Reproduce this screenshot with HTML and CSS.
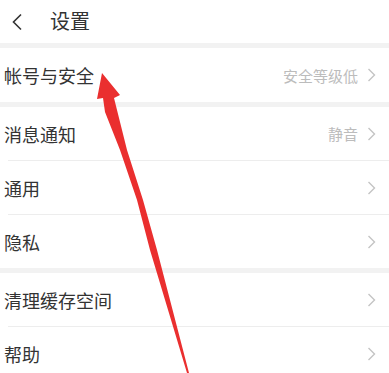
FILE: index.html
```html
<!DOCTYPE html>
<html lang="zh-CN">

<head>
  <meta charset="UTF-8" />
  <meta name="viewport" content="width=device-width, initial-scale=1.0" />
  <title>设置</title>
  <link rel="stylesheet" href="styles.css">
</head>

<body>
  <div class="page">
    <div class="header">
      <svg class="back" width="12" height="18" viewBox="0 0 12 18">
        <path d="M10 1.5 L2.5 9 L10 16.5" fill="none" stroke="#333" stroke-width="1.6" />
      </svg>
      <span class="title">设置</span>
    </div>

    <div class="band"></div>
    <div class="group">
      <div class="row tall">
        <span class="label">帐号与安全</span>
        <span class="value">安全等级低</span>
        <svg class="chev" width="9" height="14" viewBox="0 0 9 14">
          <path d="M1.5 1 L7.5 7 L1.5 13" fill="none" stroke="#c4c4c4" stroke-width="1.4" />
        </svg>
      </div>
    </div>

    <div class="band"></div>
    <div class="group">
      <div class="row">
        <span class="label">消息通知</span>
        <span class="value">静音</span>
        <svg class="chev" width="9" height="14" viewBox="0 0 9 14">
          <path d="M1.5 1 L7.5 7 L1.5 13" fill="none" stroke="#c4c4c4" stroke-width="1.4" />
        </svg>
      </div>
      <div class="row">
        <span class="label">通用</span>
        <svg class="chev" width="9" height="14" viewBox="0 0 9 14">
          <path d="M1.5 1 L7.5 7 L1.5 13" fill="none" stroke="#c4c4c4" stroke-width="1.4" />
        </svg>
      </div>
      <div class="row">
        <span class="label">隐私</span>
        <svg class="chev" width="9" height="14" viewBox="0 0 9 14">
          <path d="M1.5 1 L7.5 7 L1.5 13" fill="none" stroke="#c4c4c4" stroke-width="1.4" />
        </svg>
      </div>
    </div>

    <div class="band"></div>
    <div class="group">
      <div class="row">
        <span class="label">清理缓存空间</span>
        <svg class="chev" width="9" height="14" viewBox="0 0 9 14">
          <path d="M1.5 1 L7.5 7 L1.5 13" fill="none" stroke="#c4c4c4" stroke-width="1.4" />
        </svg>
      </div>
      <div class="row">
        <span class="label">帮助</span>
        <svg class="chev" width="9" height="14" viewBox="0 0 9 14">
          <path d="M1.5 1 L7.5 7 L1.5 13" fill="none" stroke="#c4c4c4" stroke-width="1.4" />
        </svg>
      </div>
    </div>

    <!-- red annotation arrow drawn over the list -->
    <svg class="arrow" width="389" height="373" viewBox="0 0 389 373">
      <polygon fill="#ea2f2f"
        points="102,73 120,95 114,98 127,150 143,200 157,250 189,373 187,373 150,250 137,200 120,150 105,112 103,98 97,99" />
    </svg>
  </div>
</body>

</html>
```

FILE: styles.css
```css
:root {
  --band: #f2f2f2;
  --divider: #ededed;
  --text: #333;
  --muted: #bcbcbc;
}

body {
  margin: 0;
  background: #fff;
  font-family: "Noto Sans CJK SC", "Noto Sans", sans-serif;
  color: var(--text);
}

.page {
  position: relative;
  width: 389px;
  height: 373px;
  overflow: hidden;
}

.header {
  height: 43px;
  display: flex;
  align-items: center;
  padding-left: 11px;
}

.back {
  margin-right: 27px;
}

.title {
  font-size: 20px;
  line-height: 1;
  margin-top: -2px;
}

.band {
  height: 5px;
  background: var(--band);
}

.row {
  position: relative;
  height: 53px;
  display: flex;
  align-items: center;
  padding: 0 13px 0 4px;
}

.row.tall {
  height: 54px;
}

.row + .row {
  border-top: 1px solid transparent;
}

.row + .row::before {
  content: "";
  position: absolute;
  left: 8px;
  right: 0;
  top: -1px;
  height: 1px;
  background: var(--divider);
}

.label {
  flex: 1;
  font-size: 18px;
  line-height: 1;
}

.value {
  font-size: 15px;
  line-height: 1;
  color: var(--muted);
  margin-right: 9px;
}

.arrow {
  position: absolute;
  left: 0;
  top: 0;
  pointer-events: none;
}
```
